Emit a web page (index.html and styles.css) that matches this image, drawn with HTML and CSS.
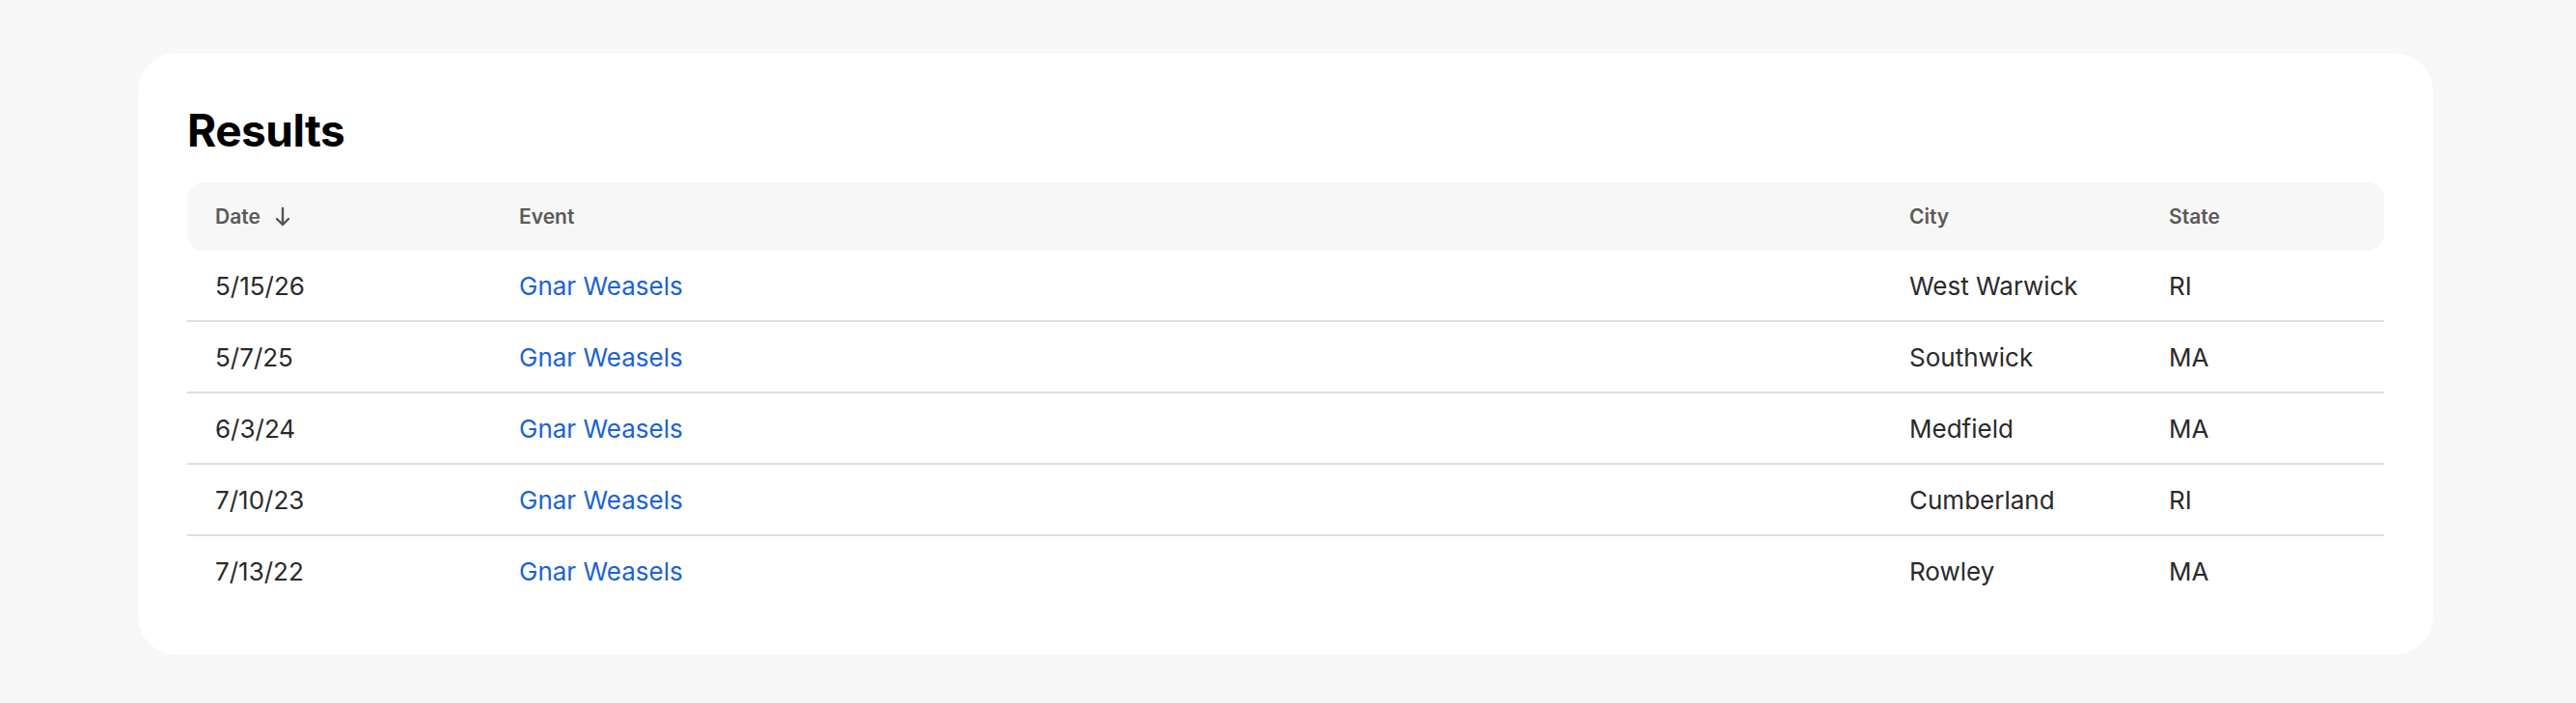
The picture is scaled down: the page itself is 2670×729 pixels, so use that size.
FILE: index.html
```html
<!DOCTYPE html>
<html lang="en">
<head>
  <meta charset="UTF-8" />
  <title>Results</title>
  <meta name="viewport" content="width=device-width, initial-scale=1.0"/>
  <link rel="stylesheet" href="styles.css">
</head>
<body>
  <div class="card">
    <h1>Results</h1>
    <table class="results">
      <colgroup>
        <col class="col-date">
        <col class="col-event">
        <col class="col-city">
        <col class="col-state">
      </colgroup>
      <thead>
        <tr>
          <th>Date
            <svg class="sort" width="16" height="21" viewBox="0 0 16 21" fill="none" stroke="#555" stroke-width="2.4" stroke-linecap="round" stroke-linejoin="round"><path d="M8 2v17M2 13l6 6 6-6"/></svg>
          </th>
          <th>Event</th>
          <th>City</th>
          <th>State</th>
        </tr>
      </thead>
      <tbody>
        <tr><td>5/15/26</td><td><a href="#">Gnar Weasels</a></td><td>West Warwick</td><td>RI</td></tr>
        <tr><td>5/7/25</td><td><a href="#">Gnar Weasels</a></td><td>Southwick</td><td>MA</td></tr>
        <tr><td>6/3/24</td><td><a href="#">Gnar Weasels</a></td><td>Medfield</td><td>MA</td></tr>
        <tr><td>7/10/23</td><td><a href="#">Gnar Weasels</a></td><td>Cumberland</td><td>RI</td></tr>
        <tr><td>7/13/22</td><td><a href="#">Gnar Weasels</a></td><td>Rowley</td><td>MA</td></tr>
      </tbody>
    </table>
  </div>
</body>
</html>
```

FILE: styles.css
```css
body { margin: 0; background: #f7f7f7; font-family: Inter, "Noto Sans", sans-serif; color: #2a2a2a; }
.card {
  background: #fff;
  border-radius: 40px;
  margin: 55px 148px 0 143px;
  padding: 51px 51px 51px;
}
h1 { font-size: 46px; font-weight: 700; color: #000; margin: 0 0 25px; line-height: 58px; letter-spacing: -0.5px; }
.results { width: 100%; border-collapse: separate; border-spacing: 0; table-layout: fixed; }
.col-date { width: 315px; }
.col-city { width: 269px; }
.col-state { width: 252px; }
th {
  background: #f7f7f7; color: #5a5a5a; font-size: 21px; font-weight: 600;
  text-align: left; height: 71px; padding: 0 29px;
}
th:first-child { border-radius: 17px 0 0 17px; }
th:last-child { border-radius: 0 17px 17px 0; }
.sort { margin-left: 10px; vertical-align: -3px; }
td { font-size: 26px; height: 72px; padding: 0 29px; border-bottom: 2px solid #dedede; }
tbody tr:last-child td { border-bottom: none; }
a { color: #1a62d6; text-decoration: none; }
```
